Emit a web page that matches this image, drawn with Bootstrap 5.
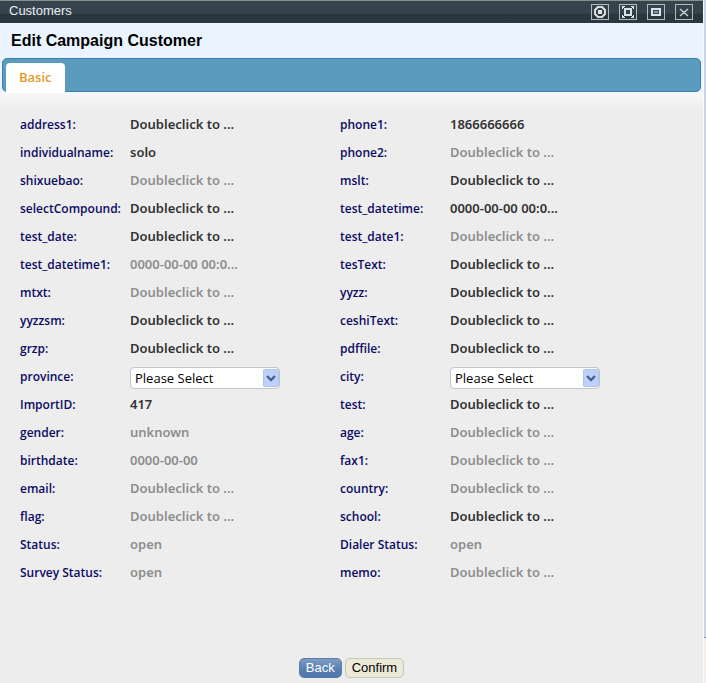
<!DOCTYPE html>
<html lang="en">
<head>
<meta charset="utf-8">
<meta name="viewport" content="width=device-width, initial-scale=1">
<title>Customers</title>
<link href="https://cdn.jsdelivr.net/npm/bootstrap@5.3.0/dist/css/bootstrap.min.css" rel="stylesheet">
<style>
body { background: #ededed; font-family: "Open Sans", "Noto Sans", sans-serif; font-size: 13px; line-height: 20px; color: #333; }
.page-shell { min-height: 100vh; }
.side-rail { width: 3px; background: #f3eeea; border-left: 1px solid #fbfbfb; }
.side-thumb { height: 638px; background: #c9d5e6; border-bottom: 1px solid #8495b0; }
.window-bar { height: 23px; border-top: 1px solid #87918f; background: linear-gradient(#35444c 0 55%, #2a363d 60%, #2c383f); padding: 0 10px 0 9px; color: #fff; font: 13px/20px "Liberation Sans", Arial, sans-serif; }
.window-bar h1 { font: inherit; color: #e8eef0; }
.tool-group { gap: 10px; padding-top: 3px; }
.tool-btn { width: 18px; height: 16px; border: 1px solid #aebcc2; background: transparent; line-height: 0; }
.title-band { height: 35px; background: #e9f4ff; padding: 0 11px; }
.title-band h2 { font: bold 16px/35px "Liberation Sans", Arial, sans-serif; color: #000; }
.tab-strip { height: 34px; margin: 0 2px; padding: 4px 3px 0; background: #5b9bbd; border: 1px solid #3a80ae; border-radius: 5px; }
.tab-strip .nav-link { height: 30px; padding: 0 13px; border-radius: 4px 4px 0 0; background: #fff; color: #e09a26; font-size: 13px; font-weight: 600; line-height: 28px; }
.title-wrap { background: #e9f4ff; }
.form-area { background: linear-gradient(#f8f8f8, #ededed 20px); padding: 19px 0 0 20px; }
.field-grid { display: grid; grid-template-columns: 110px 210fr 110px 253fr; grid-auto-rows: 28px; }
.field-grid > label, .field-grid > .field-name { color: #0b0b63; font-size: 12px; font-weight: 600; line-height: 28px; white-space: nowrap; }
.field-value { font-family: "Noto Sans", "Open Sans", sans-serif; font-size: 13px; font-weight: 600; line-height: 26px; white-space: nowrap; }
.field-value.dim { color: #8d8d8d; }
.picker { position: relative; width: 150px; height: 22px; margin-top: 4px; }
.picker select { appearance: none; width: 100%; height: 22px; padding: 0 20px 0 4px; border: 1px solid #c3c6cc; border-radius: 4px; background: #fff; color: #000; font: 13px/20px "Open Sans", "Noto Sans", sans-serif; }
.picker svg { position: absolute; top: 2px; right: 1px; pointer-events: none; }
.form-actions { padding-top: 71px; gap: 3px; }
.form-actions .btn { height: 20px; padding: 0 6px; border-radius: 5px; font: 13px/18px "Liberation Sans", Arial, sans-serif; }
.btn-back { color: #fff; background: linear-gradient(#7f9dc4, #5a80b2 55%, #5077ac); border: 1px solid #587cab; }
.btn-confirm { color: #000; background: #ece9d8; border: 1px solid #c6c8b9; }
</style>
<script src="https://cdn.jsdelivr.net/npm/bootstrap@5.3.0/dist/js/bootstrap.bundle.min.js"></script>
</head>
<body>
<div class="page-shell d-flex">
<main class="flex-grow-1">
  <header class="window-bar d-flex align-items-start justify-content-between">
    <h1 class="m-0">Customers</h1>
    <div class="tool-group d-flex">
      <button type="button" class="tool-btn p-0" aria-label="Record"><svg width="16" height="14" shape-rendering="crispEdges"><path d="M6 2h4l3 3v4l-3 3H6L3 9V5z" fill="none" stroke="#d8d8d8" stroke-width="2"/><path d="M6 5h4v4H6z" fill="#e2e2e2"/></svg></button>
      <button type="button" class="tool-btn p-0" aria-label="Full screen"><svg width="16" height="14" shape-rendering="crispEdges"><path d="M2 1h3v1H4v1H3v1H2zM11 1h3v3h-1V3h-1V2h-1zM2 10h1v1h1v1h1v1H2zM13 10h1v3h-3v-1h1v-1h1z" fill="#d9e3e7"/><path d="M5 4h6v6H5z" fill="none" stroke="#d9e3e7" stroke-width="2"/></svg></button>
      <button type="button" class="tool-btn p-0" aria-label="Restore"><svg width="16" height="14" shape-rendering="crispEdges"><path d="M3 3h10v8H3z" fill="#dbe4ed"/><path d="M5 5h6v4H5z" fill="#36454f"/><path d="M6 6h4v2H6z" fill="#8794a1"/></svg></button>
      <button type="button" class="tool-btn p-0" aria-label="Close"><svg width="16" height="14"><path d="M4 4l8 7M12 4l-8 7" fill="none" stroke="#c5d0d5" stroke-width="1.5"/></svg></button>
    </div>
  </header>
  <div class="title-band"><h2 class="m-0">Edit Campaign Customer</h2></div>
  <nav class="title-wrap"><div class="tab-strip nav"><a href="#basic" class="nav-link active" aria-current="page">Basic</a></div></nav>
  <form class="form-area" id="basic">
    <div class="field-grid">
      <span class="field-name">address1:</span><span class="field-value">Doubleclick to ...</span>
      <span class="field-name">phone1:</span><span class="field-value">1866666666</span>
      <span class="field-name">individualname:</span><span class="field-value">solo</span>
      <span class="field-name">phone2:</span><span class="field-value dim">Doubleclick to ...</span>
      <span class="field-name">shixuebao:</span><span class="field-value dim">Doubleclick to ...</span>
      <span class="field-name">mslt:</span><span class="field-value">Doubleclick to ...</span>
      <span class="field-name">selectCompound:</span><span class="field-value">Doubleclick to ...</span>
      <span class="field-name">test_datetime:</span><span class="field-value">0000-00-00 00:0...</span>
      <span class="field-name">test_date:</span><span class="field-value">Doubleclick to ...</span>
      <span class="field-name">test_date1:</span><span class="field-value dim">Doubleclick to ...</span>
      <span class="field-name">test_datetime1:</span><span class="field-value dim">0000-00-00 00:0...</span>
      <span class="field-name">tesText:</span><span class="field-value">Doubleclick to ...</span>
      <span class="field-name">mtxt:</span><span class="field-value dim">Doubleclick to ...</span>
      <span class="field-name">yyzz:</span><span class="field-value">Doubleclick to ...</span>
      <span class="field-name">yyzzsm:</span><span class="field-value">Doubleclick to ...</span>
      <span class="field-name">ceshiText:</span><span class="field-value">Doubleclick to ...</span>
      <span class="field-name">grzp:</span><span class="field-value">Doubleclick to ...</span>
      <span class="field-name">pdffile:</span><span class="field-value">Doubleclick to ...</span>
      <label for="province">province:</label>
      <div class="picker"><select id="province"><option>Please Select</option></select><svg width="16" height="18"><rect x=".5" y=".5" width="15" height="17" rx="1" fill="#bed1f8" stroke="#aec3ee"/><path d="M4 7l4 4 4-4" fill="none" stroke="#46608f" stroke-width="2.4"/></svg></div>
      <label for="city">city:</label>
      <div class="picker"><select id="city"><option>Please Select</option></select><svg width="16" height="18"><rect x=".5" y=".5" width="15" height="17" rx="1" fill="#bed1f8" stroke="#aec3ee"/><path d="M4 7l4 4 4-4" fill="none" stroke="#46608f" stroke-width="2.4"/></svg></div>
      <span class="field-name">ImportID:</span><span class="field-value">417</span>
      <span class="field-name">test:</span><span class="field-value">Doubleclick to ...</span>
      <span class="field-name">gender:</span><span class="field-value dim">unknown</span>
      <span class="field-name">age:</span><span class="field-value dim">Doubleclick to ...</span>
      <span class="field-name">birthdate:</span><span class="field-value dim">0000-00-00</span>
      <span class="field-name">fax1:</span><span class="field-value dim">Doubleclick to ...</span>
      <span class="field-name">email:</span><span class="field-value dim">Doubleclick to ...</span>
      <span class="field-name">country:</span><span class="field-value dim">Doubleclick to ...</span>
      <span class="field-name">flag:</span><span class="field-value dim">Doubleclick to ...</span>
      <span class="field-name">school:</span><span class="field-value">Doubleclick to ...</span>
      <span class="field-name">Status:</span><span class="field-value dim">open</span>
      <span class="field-name">Dialer Status:</span><span class="field-value dim">open</span>
      <span class="field-name">Survey Status:</span><span class="field-value dim">open</span>
      <span class="field-name">memo:</span><span class="field-value dim">Doubleclick to ...</span>
    </div>
  </form>
  <div class="form-actions d-flex justify-content-center">
    <button type="button" class="btn btn-back">Back</button>
    <button type="button" class="btn btn-confirm">Confirm</button>
  </div>
</main>
<div class="side-rail"><div class="side-thumb"></div></div>
</div>
</body>
</html>
